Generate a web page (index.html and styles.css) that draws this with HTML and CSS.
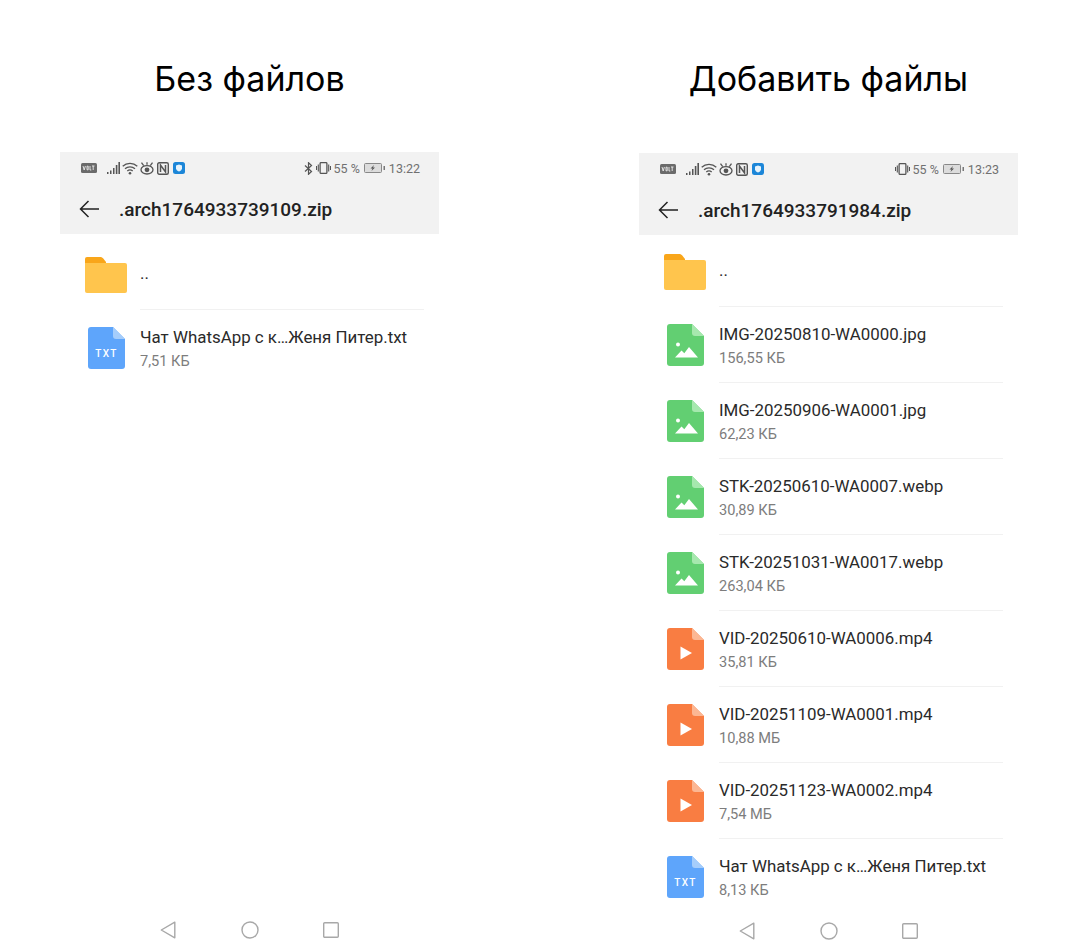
FILE: index.html
```html
<!DOCTYPE html>
<html lang="ru">
<head>
  <meta charset="UTF-8">
  <meta name="viewport" content="width=device-width, initial-scale=1.0" />
  <title>Архивы</title>
  <link rel="stylesheet" href="styles.css">
</head>
<body>

  <svg class="sprite" xmlns="http://www.w3.org/2000/svg">
    <symbol id="folder" viewBox="0 0 42 36">
      <path fill="#f9a61a" d="M2 0h13c1.500 0 2.500.6 3.500 1.700L21 5v3H0V2a2 2 0 0 1 2-2z"/>
      <path fill="#ffc54d" d="M0 6h40a2 2 0 0 1 2 2v26a2 2 0 0 1-2 2H2a2 2 0 0 1-2-2z"/>
    </symbol>
    <symbol id="file-img" viewBox="0 0 37 42">
      <path fill="#62cf72" d="M3 0h22l12 12v27a3 3 0 0 1-3 3H3a3 3 0 0 1-3-3V3a3 3 0 0 1 3-3z"/>
      <path fill="#a6e8ae" d="M25 0l12 12h-9a3 3 0 0 1-3-3z"/>
      <circle fill="#fff" cx="11" cy="20.500" r="2"/>
      <path fill="#fff" d="M8 33.500l6.500-7 2.800 2.800 4.700-6.300 9 10.500z"/>
    </symbol>
    <symbol id="file-vid" viewBox="0 0 37 42">
      <path fill="#f97d42" d="M3 0h22l12 12v27a3 3 0 0 1-3 3H3a3 3 0 0 1-3-3V3a3 3 0 0 1 3-3z"/>
      <path fill="#fcb793" d="M25 0l12 12h-9a3 3 0 0 1-3-3z"/>
      <path fill="#fff" d="M13.500 18.500l11.500 6.500-11.500 6.500z"/>
    </symbol>
    <symbol id="file-txt" viewBox="0 0 37 42">
      <path fill="#5ea5fb" d="M3 0h22l12 12v27a3 3 0 0 1-3 3H3a3 3 0 0 1-3-3V3a3 3 0 0 1 3-3z"/>
      <path fill="#a5cdfb" d="M25 0l12 12h-9a3 3 0 0 1-3-3z"/>
    </symbol>
    <symbol id="back" viewBox="0 0 20 18">
      <path fill="none" stroke="#222" stroke-width="1.500" d="M20 9H1.500M9.500 1L1.500 9l8 8"/>
    </symbol>
    <symbol id="volte" viewBox="0 0 16 10">
      <rect width="16" height="10" rx="1.500" fill="#6b6b6b"/>
      <path fill="none" stroke="#eee" stroke-width=".9" d="M2 3l1.200 4 1.200-4M6 3.200h1.200v3.600H6zM9 3v4h1.300M11 3h2.500M12.200 3v4"/>
    </symbol>
    <symbol id="signal" viewBox="0 0 13 12">
      <path fill="#555" d="M0 10h1.500v2H0zM3 8.500h1.500V12H3zM6 6h1.500v6H6zM8.800 3h1.600v9H8.800zM11.400 0H13v12h-1.600z"/>
    </symbol>
    <symbol id="wifi" viewBox="0 0 16 13">
      <g fill="none" stroke="#555" stroke-width="1.300">
        <path d="M.7 4.300c4-3.800 10.600-3.800 14.600 0M3 6.800c2.800-2.600 7.200-2.600 10 0M5.300 9.100c1.500-1.400 3.900-1.400 5.400 0"/>
      </g>
      <circle cx="8" cy="11.300" r="1.300" fill="#555"/>
    </symbol>
    <symbol id="eye" viewBox="0 0 14 13">
      <g fill="none" stroke="#555" stroke-width="1.300">
        <ellipse cx="7" cy="7.800" rx="6" ry="4.200"/>
        <path d="M1.500 .7l2.200 3M12.500 .7l-2.200 3M7 .3v2.500"/>
      </g>
      <circle cx="7" cy="7.800" r="2.400" fill="#555"/>
    </symbol>
    <symbol id="nfc" viewBox="0 0 12 13">
      <rect x=".7" y=".7" width="10.600" height="11.600" rx="1.500" fill="none" stroke="#555" stroke-width="1.400"/>
      <path fill="none" stroke="#555" stroke-width="1.500" d="M3.500 10V3l5 7V3"/>
    </symbol>
    <symbol id="shield" viewBox="0 0 12 12">
      <rect width="12" height="12" rx="2.500" fill="#1c86d8"/>
      <path fill="#e6f3fc" d="M6 2.500l3 1v2.800c0 1.600-1.300 2.700-3 3.200-1.700-.5-3-1.600-3-3.200V3.500z"/>
    </symbol>
    <symbol id="bluetooth" viewBox="0 0 9 13">
      <path fill="none" stroke="#555" stroke-width="1.200" d="M1 3.500l6.500 6-3 2.800V.7l3 2.800-6.500 6"/>
    </symbol>
    <symbol id="vibrate" viewBox="0 0 15 12">
      <rect x="4.100" y=".6" width="6.800" height="10.800" rx="1" fill="none" stroke="#555" stroke-width="1.300"/>
      <path fill="none" stroke="#555" stroke-width="1.100" d="M2.300 2.500v7M.5 4v4M12.700 2.500v7M14.500 4v4"/>
    </symbol>
    <symbol id="battery" viewBox="0 0 21 10">
      <rect x=".5" y=".5" width="17" height="9" rx="1" fill="#dcdcdc" stroke="#888"/>
      <path fill="#555" d="M10 2L6.500 5.500h2L7.500 8 11 4.500H9z"/>
      <rect x="19.500" y="3" width="1.500" height="4" fill="#777"/>
    </symbol>
    <symbol id="nav-back" viewBox="0 0 16 18">
      <path fill="none" stroke="#a8a8a8" stroke-width="1.400" stroke-linejoin="round" d="M14.800 1.200v15.600L1.300 9z"/>
    </symbol>
    <symbol id="nav-home" viewBox="0 0 18 18">
      <circle cx="9" cy="9" r="8" fill="none" stroke="#a8a8a8" stroke-width="1.400"/>
    </symbol>
    <symbol id="nav-recent" viewBox="0 0 18 18">
      <rect x="1.700" y="1.700" width="14.600" height="14.600" rx="1" fill="none" stroke="#a8a8a8" stroke-width="1.400"/>
    </symbol>
  </svg>

  <div class="page">

    <section class="col">
      <h1 class="heading">Без файлов</h1>
      <div class="phone">
        <div class="top">
          <div class="status">
            <svg class="ic-volte"><use href="#volte"/></svg>
            <svg class="ic-signal"><use href="#signal"/></svg>
            <svg class="ic-wifi"><use href="#wifi"/></svg>
            <svg class="ic-eye"><use href="#eye"/></svg>
            <svg class="ic-nfc"><use href="#nfc"/></svg>
            <svg class="ic-shield"><use href="#shield"/></svg>
            <div class="status-right">
              <svg class="ic-bt"><use href="#bluetooth"/></svg>
              <svg class="ic-vibrate"><use href="#vibrate"/></svg>
              <span>55 %</span>
              <svg class="ic-battery"><use href="#battery"/></svg>
              <span>13:22</span>
            </div>
          </div>
          <div class="appbar">
            <svg class="ic-back"><use href="#back"/></svg>
            <div class="path">.arch1764933739109.zip</div>
          </div>
        </div>
        <div class="list">
          <div class="row row-folder">
            <svg class="ic-folder"><use href="#folder"/></svg>
            <div class="info"><div class="name">..</div></div>
          </div>
          <div class="row">
            <div class="file">
              <svg class="ic-file"><use href="#file-txt"/></svg>
              <span class="file-label">TXT</span>
            </div>
            <div class="info">
              <div class="name">Чат WhatsApp с к…Женя Питер.txt</div>
              <div class="size">7,51 КБ</div>
            </div>
          </div>
        </div>
        <div class="nav">
          <svg class="ic-nav-back"><use href="#nav-back"/></svg>
          <svg class="ic-nav"><use href="#nav-home"/></svg>
          <svg class="ic-nav"><use href="#nav-recent"/></svg>
        </div>
      </div>
    </section>

    <section class="col col-right">
      <h1 class="heading">Добавить файлы</h1>
      <div class="phone">
        <div class="top">
          <div class="status">
            <svg class="ic-volte"><use href="#volte"/></svg>
            <svg class="ic-signal"><use href="#signal"/></svg>
            <svg class="ic-wifi"><use href="#wifi"/></svg>
            <svg class="ic-eye"><use href="#eye"/></svg>
            <svg class="ic-nfc"><use href="#nfc"/></svg>
            <svg class="ic-shield"><use href="#shield"/></svg>
            <div class="status-right">
              <svg class="ic-vibrate"><use href="#vibrate"/></svg>
              <span>55 %</span>
              <svg class="ic-battery"><use href="#battery"/></svg>
              <span>13:23</span>
            </div>
          </div>
          <div class="appbar">
            <svg class="ic-back"><use href="#back"/></svg>
            <div class="path">.arch1764933791984.zip</div>
          </div>
        </div>
        <div class="list">
          <div class="row row-folder row-scrolled">
            <svg class="ic-folder"><use href="#folder"/></svg>
            <div class="info"><div class="name">..</div></div>
          </div>
          <div class="row">
            <div class="file"><svg class="ic-file"><use href="#file-img"/></svg></div>
            <div class="info">
              <div class="name">IMG-20250810-WA0000.jpg</div>
              <div class="size">156,55 КБ</div>
            </div>
          </div>
          <div class="row">
            <div class="file"><svg class="ic-file"><use href="#file-img"/></svg></div>
            <div class="info">
              <div class="name">IMG-20250906-WA0001.jpg</div>
              <div class="size">62,23 КБ</div>
            </div>
          </div>
          <div class="row">
            <div class="file"><svg class="ic-file"><use href="#file-img"/></svg></div>
            <div class="info">
              <div class="name">STK-20250610-WA0007.webp</div>
              <div class="size">30,89 КБ</div>
            </div>
          </div>
          <div class="row">
            <div class="file"><svg class="ic-file"><use href="#file-img"/></svg></div>
            <div class="info">
              <div class="name">STK-20251031-WA0017.webp</div>
              <div class="size">263,04 КБ</div>
            </div>
          </div>
          <div class="row">
            <div class="file"><svg class="ic-file"><use href="#file-vid"/></svg></div>
            <div class="info">
              <div class="name">VID-20250610-WA0006.mp4</div>
              <div class="size">35,81 КБ</div>
            </div>
          </div>
          <div class="row">
            <div class="file"><svg class="ic-file"><use href="#file-vid"/></svg></div>
            <div class="info">
              <div class="name">VID-20251109-WA0001.mp4</div>
              <div class="size">10,88 МБ</div>
            </div>
          </div>
          <div class="row">
            <div class="file"><svg class="ic-file"><use href="#file-vid"/></svg></div>
            <div class="info">
              <div class="name">VID-20251123-WA0002.mp4</div>
              <div class="size">7,54 МБ</div>
            </div>
          </div>
          <div class="row">
            <div class="file">
              <svg class="ic-file"><use href="#file-txt"/></svg>
              <span class="file-label">TXT</span>
            </div>
            <div class="info">
              <div class="name">Чат WhatsApp с к…Женя Питер.txt</div>
              <div class="size">8,13 КБ</div>
            </div>
          </div>
        </div>
        <div class="nav">
          <svg class="ic-nav-back"><use href="#nav-back"/></svg>
          <svg class="ic-nav"><use href="#nav-home"/></svg>
          <svg class="ic-nav"><use href="#nav-recent"/></svg>
        </div>
      </div>
    </section>

  </div>

</body>
</html>
```

FILE: styles.css
```css
body {
  margin: 0;
  background: #fff;
  font-family: 'Roboto', sans-serif;
}
.sprite {
  display: none;
}
.page {
  display: flex;
  justify-content: space-between;
  padding: 0 60px;
  height: 952px;
  box-sizing: border-box;
}
.col {
  width: 379px;
  display: flex;
  flex-direction: column;
}
.heading {
  height: 152px;
  margin: 0;
  padding-top: 5px;
  box-sizing: border-box;
  display: flex;
  align-items: center;
  justify-content: center;
  font-family: 'Inter', sans-serif;
  font-weight: 400;
  font-size: 34px;
  color: #000;
}
.col-right .heading {
  height: 153px;
  padding-top: 4px;
}
.phone {
  height: 794px;
  display: flex;
  flex-direction: column;
}
.top {
  height: 82px;
  background: #f2f2f2;
}

/* status bar */
.status {
  height: 32px;
  padding: 0 19px 0 21px;
  display: flex;
  align-items: center;
  font-size: 12.5px;
  color: #707070;
}
.status svg {
  flex: none;
}
.ic-volte {
  width: 16px;
  height: 10px;
  margin-right: 10px;
}
.ic-signal {
  width: 13px;
  height: 12px;
  margin-right: 2px;
}
.ic-wifi {
  width: 16px;
  height: 13px;
  margin-right: 2px;
}
.ic-eye {
  width: 14px;
  height: 13px;
  margin-right: 3px;
}
.ic-nfc {
  width: 12px;
  height: 13px;
  margin-right: 4px;
}
.ic-shield {
  width: 12px;
  height: 12px;
}
.status-right {
  margin-left: auto;
  display: flex;
  align-items: center;
}
.ic-bt {
  width: 9px;
  height: 13px;
  margin-right: 3px;
}
.ic-vibrate {
  width: 15px;
  height: 12px;
  margin-right: 3px;
}
.ic-battery {
  width: 21px;
  height: 10px;
  margin: 0 4px;
}

.appbar {
  height: 50px;
  display: flex;
  align-items: center;
  padding-left: 19px;
}
.ic-back {
  width: 20px;
  height: 18px;
  margin-right: 20px;
}
.path {
  font-size: 19px;
  font-weight: 500;
  color: #222;
}

/* file list */
.list {
  flex: 1;
  overflow: hidden;
}
.row {
  height: 76px;
  display: flex;
  padding: 0 15px 0 28px;
}
.row-folder {
  padding-left: 25px;
}
.row-scrolled {
  height: 72px;
}
.row:last-child .info {
  border-bottom: none;
}
.ic-folder {
  width: 42px;
  height: 36px;
  margin-top: 23px;
  margin-right: 13px;
  flex: none;
}
.row-scrolled .ic-folder {
  margin-top: 19px;
}
.file {
  width: 37px;
  height: 42px;
  margin: 16.5px 15px 0 0;
  position: relative;
  flex: none;
}
.ic-file {
  display: block;
  width: 37px;
  height: 42px;
}
.file-label {
  position: absolute;
  left: 0;
  right: 0;
  top: 21px;
  text-align: center;
  font-size: 10px;
  font-weight: 500;
  letter-spacing: 1.3px;
  color: #fff;
}
.info {
  flex: 1;
  border-bottom: 1px solid #f1f1f1;
  box-sizing: border-box;
  padding-top: 16px;
}
.row-folder .info {
  padding-top: 28px;
}
.row-scrolled .info {
  padding-top: 24px;
}
.name {
  font-size: 16.9px;
  line-height: 22px;
  color: #2a2a2a;
}
.size {
  font-size: 14.6px;
  line-height: 20px;
  margin-top: 2.5px;
  color: #7d7d7d;
}

.nav {
  height: 32px;
  display: flex;
  justify-content: center;
  align-items: center;
  gap: 63px;
}
.ic-nav,
.ic-nav-back {
  width: 18px;
  height: 18px;
}
.ic-nav-back {
  margin-right: 1px;
}
```
